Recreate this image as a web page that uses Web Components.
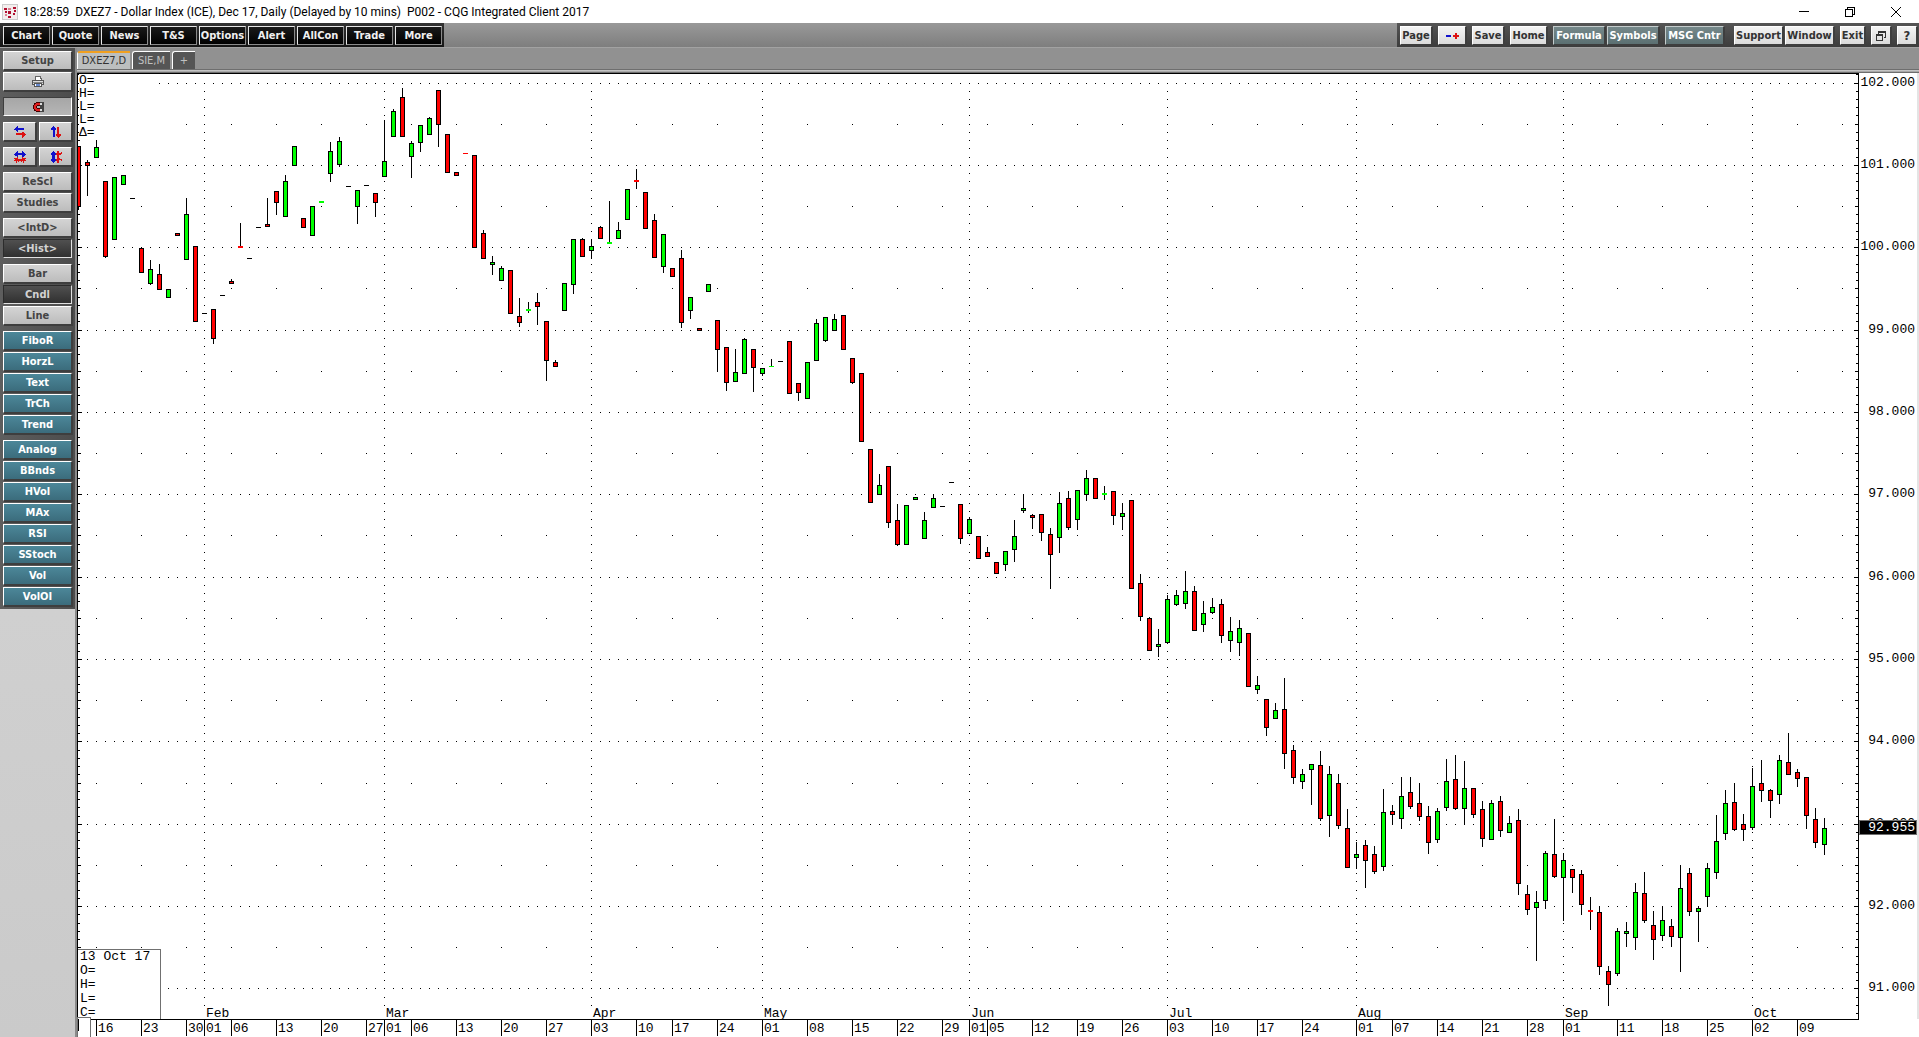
<!DOCTYPE html>
<html lang="en">
<head>
<meta charset="utf-8">
<title>CQG Integrated Client 2017</title>
<style>
  html, body { margin: 0; height: 100%; }
  body { font: 12px/16px "Roboto", "Liberation Sans", sans-serif; background: #fff; color: #000; overflow: hidden; }
</style>
</head>
<body>
<cqg-app></cqg-app>
<script>
const define = (name, html, ready) => {
  const tpl = document.createElement('template');
  tpl.innerHTML = html;
  customElements.define(name, class extends HTMLElement {
    constructor() {
      super();
      this.attachShadow({ mode: 'open' }).appendChild(tpl.content.cloneNode(true));
    }
    connectedCallback() { if (ready) ready(this, this.shadowRoot); }
  });
};

/* ---------- Push button used by both tool bars ---------- */
define('tool-button', `
<style>
  :host { display: flex; min-width: 0; }
  button {
    flex: 1; display: flex; align-items: center; justify-content: center;
    min-width: 0; margin: 0; padding: 0; overflow: hidden; white-space: nowrap; box-sizing: border-box;
    font: bold 11px/14px "DejaVu Sans Condensed", "DejaVu Sans", sans-serif;
    border: 1px solid; border-color: #fff #3e3e3e #3e3e3e #fff;
    color: #444; background: linear-gradient(#d4d4d4, #bcbcbc);
    box-shadow: 1px 1px 0 #3e3e3e;
  }
  :host([kind=black]) button { color: #f0f0f0; background: linear-gradient(#1a1a1a, #000); border-color: #e6e6e6 #8a8a8a #8a8a8a #e6e6e6; box-shadow: none; }
  :host([kind=light]) button { color: #333; background: linear-gradient(#f4f4f4, #dadada); }
  :host([kind=slate]) button { color: #fff; background: linear-gradient(#76898b, #5b6f71); border-color: #c4cccc #3e3e3e #3e3e3e #c4cccc; }
  :host([kind=teal]) button { color: #fff; background: linear-gradient(#4c8799, #3b6c7c); }
  :host([kind=on]) button { color: #d2d2d2; background: linear-gradient(#505050, #303030); border-color: #2c2c2c #e0e0e0 #e0e0e0 #2c2c2c; box-shadow: none; }
  :host([kind=pressed]) button { background: linear-gradient(#a6a6a6, #b6b6b6); border-color: #3e3e3e #fff #fff #3e3e3e; box-shadow: none; }
  :host([big]) button { font-size: 13px; }
</style>
<button type="button"><slot></slot></button>`, (host, root) => {
  const label = host.getAttribute('label');
  if (label) root.querySelector('button').setAttribute('aria-label', label);
});

/* ---------- Title bar ---------- */
define('title-bar', `
<style>
  :host { display: flex; height: 23px; align-items: center; background: #fff; }
  .logo { margin: 0 5px 0 2px; }
  .text { display: flex; gap: 6px; flex: 1; white-space: nowrap; }
  .win { display: flex; }
  .win button { width: 46px; height: 23px; border: 0; padding: 0; background: none; display: grid; place-items: center; }
  svg { display: block; }
</style>
<svg class="logo" width="16" height="16" viewBox="0 0 16 16">
  <rect x=".5" y=".5" width="15" height="15" fill="#f4eeee" stroke="#ccc"/>
  <g fill="#b01030"><rect x="2" y="4" width="3" height="2"/><rect x="3" y="7" width="2" height="2"/><rect x="6" y="7" width="3" height="3"/><rect x="6" y="12" width="3" height="2"/><rect x="11" y="3" width="3" height="2"/><rect x="12" y="6" width="2" height="2"/><rect x="11" y="9" width="2" height="2"/></g>
  <g fill="#d88090"><rect x="6" y="4" width="3" height="2"/><rect x="3" y="10" width="2" height="2"/></g>
</svg>
<div class="text"><span>18:28:59</span><span>DXEZ7 - Dollar Index (ICE), Dec 17, Daily (Delayed by 10 mins)</span><span>P002 - CQG Integrated Client 2017</span></div>
<div class="win">
  <button type="button" aria-label="Minimize"><svg width="12" height="12" shape-rendering="crispEdges"><rect x="1" y="5" width="10" height="1"/></svg></button>
  <button type="button" aria-label="Restore"><svg width="12" height="12" fill="none" stroke="#000" shape-rendering="crispEdges"><rect x="1.5" y="3.5" width="7" height="7"/><path d="M3.5 3V1.500H10.500V8.500H9"/></svg></button>
  <button type="button" aria-label="Close"><svg width="12" height="12" stroke="#000"><path d="M1 1L11 11M11 1L1 11"/></svg></button>
</div>`);

/* ---------- Top tool bar ---------- */
define('top-toolbar', `
<style>
  :host { display: flex; height: 25px; justify-content: space-between; background: linear-gradient(#999, #7e7e7e); border-bottom: 1px solid #a2a2a2; box-sizing: border-box; }
  nav { display: flex; align-items: stretch; padding: 3px 0 2px; }
  .left { gap: 2px; padding-left: 3px; padding-right: 2px; background: linear-gradient(#333, #151515); }
  .left tool-button { width: 47px; }
  .right { padding-left: 3px; padding-right: 2px; background: linear-gradient(#555, #3c3c3c); }
  .g { display: flex; gap: 2px; margin-right: 6px; }
  .wide { margin-right: 10px; }
  .g:last-child { margin-right: 0; }
  .s { width: 20px; } .e { width: 25px; } .m { width: 28px; } .p { width: 32px; } .h { width: 37px; } .x { width: 49px; } .f { width: 52px; } .c { width: 59px; }
  svg { display: block; }
</style>
<nav class="left">
  <tool-button kind="black">Chart</tool-button><tool-button kind="black">Quote</tool-button><tool-button kind="black">News</tool-button><tool-button kind="black">T&amp;S</tool-button><tool-button kind="black">Options</tool-button><tool-button kind="black">Alert</tool-button><tool-button kind="black">AllCon</tool-button><tool-button kind="black">Trade</tool-button><tool-button kind="black">More</tool-button>
</nav>
<nav class="right">
  <div class="g"><tool-button kind="light" class="p">Page</tool-button></div>
  <div class="g"><tool-button kind="light" class="m" label="Zoom out and in"><svg width="14" height="8" shape-rendering="crispEdges"><path fill="#11c" d="M1 3h5v2H1z"/><path fill="#d11" d="M8 3h2V1h2v2h2v2h-2v2h-2V5H8z"/></svg></tool-button></div>
  <div class="g"><tool-button kind="light" class="p">Save</tool-button></div>
  <div class="g"><tool-button kind="light" class="h">Home</tool-button></div>
  <div class="g"><tool-button kind="slate" class="f">Formula</tool-button><tool-button kind="slate" class="f">Symbols</tool-button></div>
  <div class="g wide"><tool-button kind="slate" class="c">MSG Cntr</tool-button></div>
  <div class="g"><tool-button kind="light" class="x">Support</tool-button><tool-button kind="light" class="x">Window</tool-button></div>
  <div class="g"><tool-button kind="light" class="e">Exit</tool-button></div>
  <div class="g"><tool-button kind="light" class="s" label="Cascade"><svg width="10" height="10" shape-rendering="crispEdges" fill="#333"><path d="M2 0h8v7H8V6h1V2H3v1H2z"/><path fill-rule="evenodd" d="M0 3h7v7H0zM1 5v4h5V5z"/></svg></tool-button></div>
  <div class="g"><tool-button kind="light" class="s" big>?</tool-button></div>
</nav>`);

/* ---------- Side tool bar ---------- */
define('side-toolbar', `
<style>
  :host { display: flex; flex-direction: column; width: 77px; background: linear-gradient(#d8d8d8, #cacaca); border-right: 2px solid #8a8a8a; box-sizing: border-box; }
  .panel { display: flex; flex-direction: column; gap: 6px; padding: 3px; background: linear-gradient(90deg, #5e5e5e, #4c4c4c); }
  .group { display: flex; flex-direction: column; gap: 2px; }
  .pair { display: flex; gap: 3px; }
  .pair tool-button { flex: 1; }
  tool-button { height: 19px; }
  svg { display: block; }
</style>
<div class="panel">
  <div class="group">
    <tool-button>Setup</tool-button>
    <tool-button label="Print"><svg width="12" height="12" shape-rendering="crispEdges"><path fill="#fff" stroke="#666" d="M3.500 4.500V.500H8.500L9.500 4.500"/><rect x=".5" y="4.500" width="11" height="4" fill="#ddd" stroke="#555"/><rect x="1" y="6" width="10" height="1" fill="#888"/><rect x="2.500" y="7.500" width="7" height="3" fill="#fff" stroke="#555"/><rect x="4" y="8" width="4" height="2" fill="#68c"/></svg></tool-button>
  </div>
  <div class="group"><tool-button kind="pressed" label="Magnet"><svg width="12" height="12" shape-rendering="crispEdges"><rect x="8" y="1" width="4" height="10" fill="#444"/><path fill="#400" d="M4 1h4v4H5v2h3v4H4V10H2V8H1V4h1V2h2z"/><path fill="#e02020" d="M4 2h4v2H5v1H4v2h1v1h3v2H4V9H3V8H2V4h1V3h1z"/><path fill="#ddd" d="M8 2h2v2H8zM8 8h2v2H8z"/></svg></tool-button></div>
  <div class="pair">
    <tool-button label="Shift horizontally"><svg width="12" height="12" shape-rendering="crispEdges"><path fill="#11c" d="M0 3h1V2h1V1h1V0h1v2h6v2H4v2H3V5H2V4H0z"/><path fill="#d11" d="M12 8h-1V7h-1V6H8v1H2v2h6v3h1v-1h1v-1h1V9h1z"/></svg></tool-button>
    <tool-button label="Shift vertically"><svg width="12" height="12" shape-rendering="crispEdges"><path fill="#11c" d="M3 0h1v1h1v1h1v2H5v7H3V4H1V2h1V1h1z"/><path fill="#d11" d="M7 1h2v7h2v2h-1v1H9v1H8v-1H7v-1H6V8h1z"/></svg></tool-button>
  </div>
  <div class="pair">
    <tool-button label="Compress horizontally"><svg width="12" height="12" shape-rendering="crispEdges"><path fill="#11c" d="M0 3h1V2h1V1h1V0h1v2h4V0h1v1h1v1h1v1h1v1h-1v1h-1v1H8V4H4v2H3V5H1V4H0z"/><path fill="#d11" d="M0 7h3V6h1v2h4V6h1v1h3v1h-1v1h1v1h-2v2H9v-2H8v1H7v-1H5v1H4v-1H3v2H2v-2H0V9h1V8H0z"/></svg></tool-button>
    <tool-button label="Compress vertically"><svg width="12" height="12" shape-rendering="crispEdges"><path fill="#11c" d="M3 0h1v1h1v1h1v2H5v4h1v2H5v1H4v1H3v-1H2v-1H1V8h1V4H1V2h1V1h1z"/><path fill="#d11" d="M7 0h2v2h2V1h1v2h-1v1H9v3h1v1h2v2h-1V9H9v3H7v-2H6V8h1V4H6V2h1z"/></svg></tool-button>
  </div>
  <div class="group"><tool-button>ReScl</tool-button><tool-button>Studies</tool-button></div>
  <div class="group"><tool-button>&lt;IntD&gt;</tool-button><tool-button kind="on">&lt;Hist&gt;</tool-button></div>
  <div class="group"><tool-button>Bar</tool-button><tool-button kind="on">Cndl</tool-button><tool-button>Line</tool-button></div>
  <div class="group"><tool-button kind="teal">FiboR</tool-button><tool-button kind="teal">HorzL</tool-button><tool-button kind="teal">Text</tool-button><tool-button kind="teal">TrCh</tool-button><tool-button kind="teal">Trend</tool-button></div>
  <div class="group"><tool-button kind="teal">Analog</tool-button><tool-button kind="teal">BBnds</tool-button><tool-button kind="teal">HVol</tool-button><tool-button kind="teal">MAx</tool-button><tool-button kind="teal">RSI</tool-button><tool-button kind="teal">SStoch</tool-button><tool-button kind="teal">Vol</tool-button><tool-button kind="teal">VolOI</tool-button></div>
</div>`);

/* ---------- Page tabs ---------- */
define('page-tabs', `
<style>
  :host { display: flex; gap: 2px; height: 25px; box-sizing: border-box; padding: 3px 0 0; background: linear-gradient(#919191 21px, #6e6e6e 21px 22px, #c4c4c4 22px 23px, #a8a8a8 23px 24px, #6e6e6e 24px); }
  button { height: 18px; box-sizing: border-box; border: 0; border-top: 1px solid #fff; border-left: 1px solid #fff; border-radius: 3px 0 0 0; margin: 0; padding: 0; text-align: center;
    font: 11px/14px "DejaVu Sans Condensed", "DejaVu Sans", sans-serif; color: #c0c0c0; background: #555; width: 38px; }
  .sel { width: 53px; color: #333; background: #bcbfbf; border-top: 2px solid #f0a020; }
  .add { width: 23px; }
</style>
<button type="button" class="sel">DXEZ7,D</button><button type="button">SIE,M</button><button type="button" class="add">+</button>`);

/* ---------- Chart ---------- */
const FIRST_X = 78, STEP = 9, TOP = 83, UNIT = 82.36;
const priceY = p => Math.floor(TOP + (102 - p) * UNIT + .01);

// high, body top, body bottom, low, type (r/g: candle, R/G: flat body, k: no range)
const CANDLES = `146 146 207 210 r|160 162 166 196 r|140 147 158 158 g|181 181 257 258 r|177 177 240 240 g|175 175 185 185 g|198 198 199 199 k|247 248 273 273 r|260 269 284 285 g|264 274 290 290 r|289 289 298 298 g|233 233 236 236 r|198 214 260 260 g|246 246 322 322 r|313 313 314 314 k|309 309 339 344 r|295 295 296 296 k|279 281 284 284 r|223 246 248 248 R|258 258 259 259 k|227 227 228 228 k|198 224 227 227 r|191 191 203 215 r|175 181 217 217 g|146 146 166 166 g|218 218 228 228 r|206 206 236 236 g|201 201 203 203 G|142 151 174 182 g|137 141 165 167 g|186 186 187 187 k|190 190 207 224 g|185 185 186 186 k|193 193 203 217 r|120 161 177 177 g|109 111 137 137 g|88 97 137 137 r|141 143 157 178 g|125 125 143 152 g|117 118 135 135 g|90 90 125 147 r|134 134 173 173 r|172 172 176 176 r|153 153 154 154 R|155 155 248 248 r|230 233 259 259 r|256 262 265 275 g|266 268 281 281 g|270 270 314 314 r|298 316 323 327 r|302 309 311 313 G|293 302 307 325 r|321 321 361 381 r|360 362 367 367 r|283 283 311 311 g|239 239 285 294 g|238 239 257 257 r|239 246 251 259 g|226 227 239 239 r|201 242 244 244 G|222 230 239 239 g|189 189 220 220 g|169 180 182 189 R|192 192 229 229 r|214 220 258 258 r|234 234 267 273 g|268 268 277 277 r|250 258 323 328 r|297 297 311 319 g|328 328 331 331 r|284 284 292 292 g|320 320 350 372 r|347 347 383 391 r|349 372 382 382 g|338 339 374 374 g|349 349 368 392 r|368 368 374 376 g|359 366 367 367 G|361 361 362 362 k|341 341 394 394 r|383 383 393 401 r|362 362 399 399 g|319 323 361 361 g|317 317 341 342 g|314 319 331 331 g|315 315 350 350 r|358 358 383 384 r|373 373 442 442 r|449 449 503 503 r|474 485 495 495 g|466 466 523 528 r|504 520 545 546 r|505 505 545 545 g|497 497 500 500 g|512 520 539 539 g|494 498 508 508 g|506 506 507 507 k|482 482 483 483 k|504 504 539 544 r|517 519 534 534 g|536 536 559 559 r|547 552 557 557 r|562 562 574 574 r|551 551 565 571 g|520 536 550 562 g|494 508 511 513 g|514 515 518 529 r|514 514 533 541 r|528 534 555 589 r|492 503 538 553 g|491 498 528 530 r|490 490 520 530 g|470 478 495 501 g|478 478 499 499 r|486 493 495 500 G|491 491 516 525 r|503 513 517 530 g|500 500 589 589 r|574 583 617 621 r|617 618 651 651 r|629 644 647 657 g|595 599 643 644 g|590 595 605 606 g|571 591 604 609 g|586 591 631 631 r|601 613 625 632 g|598 607 613 614 g|599 604 636 643 r|617 631 641 652 g|620 628 643 656 g|633 633 687 687 r|676 685 690 694 g|699 699 728 736 r|703 710 719 719 g|678 709 754 769 r|745 750 778 784 r|769 774 782 789 g|764 764 770 805 g|751 765 819 821 r|766 774 816 837 g|774 783 826 829 r|809 828 868 868 r|842 854 858 869 g|840 845 861 888 r|846 854 872 874 r|789 812 867 871 g|805 811 815 825 r|777 796 819 829 g|777 792 807 809 r|783 803 817 821 r|806 816 843 854 r|808 811 840 843 g|759 781 808 811 g|755 779 809 810 r|761 788 809 825 g|788 788 815 818 r|801 809 839 847 r|800 803 840 840 g|796 801 831 837 r|816 823 833 833 g|809 820 884 895 r|885 894 910 915 r|891 902 908 961 g|851 853 901 909 g|819 854 877 878 r|853 860 878 921 g|869 869 878 893 r|870 874 905 915 r|897 910 912 930 R|906 912 967 975 r|966 971 985 1006 r|928 931 974 976 g|922 931 934 947 g|883 892 938 950 g|872 893 921 923 r|911 925 940 960 r|906 920 936 941 g|919 926 937 947 r|865 888 938 972 g|868 873 912 916 r|906 908 912 942 g|863 868 897 907 g|815 841 873 879 g|790 803 834 840 g|783 802 830 831 r|814 824 830 841 r|768 786 828 830 g|760 783 791 802 r|789 790 801 818 r|755 760 795 804 g|733 762 775 775 r|769 772 779 787 r|777 777 816 829 r|808 819 843 848 r|818 828 845 855 g`
  .split('|').map(s => s.split(' '));

const DAYS = [[96,'16'],[141,'23'],[186,'30'],[204,'01'],[231,'06'],[276,'13'],[321,'20'],[366,'27'],[384,'01'],[411,'06'],[456,'13'],[501,'20'],[546,'27'],[591,'03'],[636,'10'],[672,'17'],[717,'24'],[762,'01'],[807,'08'],[852,'15'],[897,'22'],[942,'29'],[969,'01'],[987,'05'],[1032,'12'],[1077,'19'],[1122,'26'],[1167,'03'],[1212,'10'],[1257,'17'],[1302,'24'],[1356,'01'],[1392,'07'],[1437,'14'],[1482,'21'],[1527,'28'],[1563,'01'],[1617,'11'],[1662,'18'],[1707,'25'],[1752,'02'],[1797,'09']];
const MONTHS = [[204,'Feb'],[384,'Mar'],[591,'Apr'],[762,'May'],[969,'Jun'],[1167,'Jul'],[1356,'Aug'],[1563,'Sep'],[1752,'Oct']];
const HIDDEN_WEEKS = [1347, 1572, 1842];

const box = (x, y, w, h) => `M${x} ${y}h${w}v${h}h${-w}z`;

define('price-plot', `
<style>
  :host { display: block; position: relative; overflow: hidden; background: #fff; font: 13px/13px "Liberation Mono", monospace; border-left: 1px solid #000; border-top: 1px solid #000; }
  svg { display: block; width: 100%; height: 100%; }
  .legend, .cursor { position: absolute; background: #fff; white-space: pre; }
  .legend { left: 1px; top: 0; width: 78px; line-height: 13px; }
  .cursor { left: -1px; bottom: 0; line-height: 14px; box-sizing: border-box; width: 84px; height: 70px; padding-left: 2px; border: 1px solid #707070; border-bottom: 0; }
</style>
<svg shape-rendering="crispEdges" role="img" aria-label="Daily candlestick chart"></svg>
<div class="legend"><div>O=</div><div>H=</div><div>L=</div><div>L=</div><div>Δ=</div></div>
<div class="cursor"><div>13 Oct 17</div><div>O=</div><div>H=</div><div>L=</div><div>C=</div></div>`, (host, root) => {
  let dots = '', ticks = '', black = '', red = '', green = '';
  const months = MONTHS.map(m => m[0]);
  const weeks = DAYS.map(d => d[0]).filter(x => !months.includes(x)).concat(HIDDEN_WEEKS);
  for (let t = 1021; t >= 908; t--) {
    const y = priceY(t / 10);
    const whole = t % 10 === 0, half = t % 5 === 0;
    ticks += box(78, y, whole ? 4 : half ? 3 : 2, 1);
    if (t < 1020) for (const x of months) dots += box(x, y, 1, 1);
    if (whole) for (let x = 87; x <= 1842; x += STEP) dots += box(x, y, 1, 1);
    else if (half) for (const x of weeks) dots += box(x, y, 1, 1);
  }
  CANDLES.forEach(([h, t, b, l, k], i) => {
    const x = FIRST_X + i * STEP; h = +h; t = +t; b = +b; l = +l;
    if (l > h && k !== 'k') black += box(x, h, 1, l - h);
    const flat = box(x - 2, t, 5, b - t);
    if (k === 'k') black += flat;
    else if (k === 'R') red += flat;
    else if (k === 'G') green += flat;
    else {
      black += flat;
      const fill = box(x - 1, t + 1, 3, b - t - 2);
      if (k === 'r') red += fill; else green += fill;
    }
  });
  root.querySelector('svg').innerHTML = `<g transform="translate(-78 -74)"><path d="${dots}${ticks}"/><path d="${black}"/><path fill="#f00" d="${red}"/><path fill="#0f0" d="${green}"/></g>`;
});

define('price-axis', `
<style>
  :host { display: block; width: 64px; background: #fff; font: 13px "Liberation Mono", monospace; border-right: 2px solid #e4e4e4; }
  svg { display: block; width: 64px; height: 100%; }
</style>
<svg shape-rendering="crispEdges"></svg>`, (host, root) => {
  let ticks = box(5, 0, 1, 946) + box(0, 0, 6, 1), text = '';
  for (let t = 1021; t >= 907; t--) {
    const y = priceY(t / 10) - 73, w = t % 10 === 0 ? 4 : t % 5 === 0 ? 3 : 2;
    ticks += box(5 - w, y, w, 1);
    if (t % 10 === 0) text += `<text x="62" y="${y + 3}" text-anchor="end">${(t / 10).toFixed(3)}</text>`;
  }
  root.querySelector('svg').innerHTML = `<path d="${ticks}"/>${text}<path fill="#707070" d="${box(6, 747, 58, 15)}"/><path d="${box(7, 748, 56, 13)}"/><text x="62" y="758" text-anchor="end" fill="#fff">92.955</text>`;
});

define('time-axis', `
<style>
  :host { display: block; position: relative; height: 18px; font: 13px "Liberation Mono", monospace; }
  svg { display: block; width: 100%; height: 18px; overflow: visible; }
</style>
<svg shape-rendering="crispEdges"></svg>`, (host, root) => {
  const ticks = DAYS.map(([x]) => box(x, 1020, 1, 16)).join('');
  const text = DAYS.map(([x, d]) => `<text x="${x + 2}" y="1032">${d}</text>`).join('');
  const labels = MONTHS.map(([x, m]) => `<text x="${x + 2}" y="1017">${m}</text>`).join('');
  root.querySelector('svg').innerHTML = `<g transform="translate(-77 -1019)">${labels}<path d="${box(77, 1019, 1782, 1)}${ticks}"/>${text}<path fill="#fff" stroke="#707070" d="M77.500 1040V1017.500H90.500V1040"/><path d="${box(78, 1019, 1, 12)}"/></g>`;
});

define('price-chart', `
<style>
  :host { display: grid; grid-template-columns: minmax(0, 1fr) auto; grid-template-rows: minmax(0, 1fr) auto; background: #fff; }
  time-axis { grid-column: 1 / 3; }
</style>
<price-plot></price-plot><price-axis></price-axis><time-axis></time-axis>`);

/* ---------- Application frame ---------- */
define('cqg-app', `
<style>
  :host { display: flex; flex-direction: column; height: 100vh; }
  .body { display: flex; flex: 1; min-height: 0; }
  main { display: flex; flex-direction: column; flex: 1; min-width: 0; }
  price-chart { flex: 1; min-height: 0; }
</style>
<title-bar></title-bar>
<top-toolbar></top-toolbar>
<div class="body">
  <side-toolbar></side-toolbar>
  <main><page-tabs></page-tabs><price-chart></price-chart></main>
</div>`);
</script>
</body>
</html>
